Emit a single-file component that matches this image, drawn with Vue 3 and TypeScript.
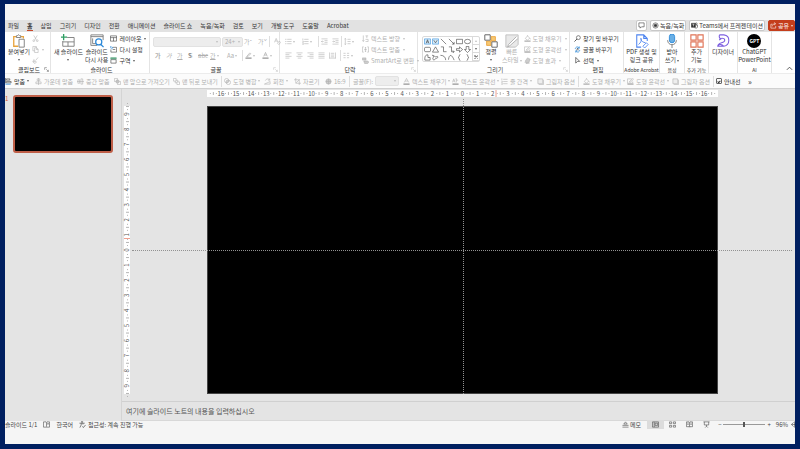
<script setup lang="ts">
import { ref } from 'vue'

interface Command {
  icon: string
  label: string
  menu?: boolean
  on?: boolean
  kind?: 'sep' | 'font' | 'check' | 'more'
}

const icons: Record<string, string> = {
  paste: '<path d="M5 3H2v11h5M10 3h3v2" stroke="#e8a33d" stroke-width="1.5"/><path d="M5 4V2h1l1-1h1l1 1h1v2z" stroke="#777"/><path d="M8 6h6v9H8z" fill="#fff" stroke="#777"/>',
  cut: '<path d="M4 1l6 10M12 1L6 11"/><circle cx="4" cy="13" r="2"/><circle cx="12" cy="13" r="2"/>',
  copy: '<path d="M6 11H2V1h8v3M6 4h5l3 3v8H6zM10 4v4h4"/>',
  brush: '<path d="M9 7l5-6M4 6l6 5-3 4-5-4zM2 11l6-1"/>',
  newSlide: '<path d="M7 4h8v10H2V8M2 9h13M8 9v5" stroke="#777"/><path d="M3 0v7M0 3.500h7" stroke="#2f9e63" stroke-width="1.500"/>',
  reuse: '<path d="M8 13H1V1h14v6M1 3h14M3 5v6h4" stroke="#777"/><circle cx="10" cy="9" r="3.500" fill="#fff" stroke="#2b88d8" stroke-width="1.400"/><path d="M12.500 12l3 3" stroke="#2b88d8" stroke-width="1.500"/>',
  layout: '<path d="M1 2h14v12H1zM1 6h14M8 6v8"/>',
  reset: '<path d="M6 3h9v11H2V8M6 8h6"/><path d="M1 5V1l6 3-5 3" stroke="#2b88d8"/>',
  section: '<path d="M2 6h12v8H2z"/><path d="M1 2h14M1 4h14" stroke="#399566" stroke-width="2"/>',
  pen: '<path d="M4 10l7-8 2 2-7 7H4z"/><path d="M1 14h14" stroke-width="3"/>',
  fontColor: '<path d="M4 10l4-9 4 9M6 7h4"/><path d="M1 14h14" stroke-width="3"/>',
  clear: '<path d="M1 10l4-9 4 9M3 7h4M8 12l4-5 3 3-4 5z"/>',
  bullets: '<path d="M1 3h2M1 8h2M1 13h2" stroke-width="2"/><path d="M5 3h10M5 8h10M5 13h10"/>',
  numbers: '<path d="M2 1v4M1 7h2v3H1M1 12h2v3H1M5 3h10M5 8h10M5 13h10"/>',
  outdent: '<path d="M1 2h14M8 6h7M8 10h7M1 14h14M6 8H1m2-2L1 8l2 2"/>',
  indent: '<path d="M1 2h14M8 6h7M8 10h7M1 14h14M1 8h5M4 6l2 2-2 2"/>',
  spacing: '<path d="M3 1v14M1 3l2-2 2 2M1 13l2 2 2-2M8 3h7M8 8h7M8 13h7"/>',
  left: '<path d="M1 2h14M1 6h9M1 10h14M1 14h9"/>',
  center: '<path d="M1 2h14M4 6h8M1 10h14M4 14h8"/>',
  right: '<path d="M1 2h14M6 6h9M1 10h14M6 14h9"/>',
  justify: '<path d="M1 2h14M1 6h14M1 10h14M1 14h14"/>',
  distribute: '<path d="M1 1v14M15 1v14M4 3h8M4 7h8M4 11h8M1 14h14"/>',
  columns: '<path d="M1 3h5M1 8h5M1 13h5M9 3h5M9 8h5M9 13h5"/>',
  textDir: '<path d="M3 1v13M1 12l2 3 2-3M8 2h6M11 2v5M8 10h6v5H8"/>',
  textAlign: '<path d="M4 2H1v12h3M12 2h3v12h-3M5 8h6M8 3v10M6 5l2-2 2 2M6 11l2 2 2-2"/>',
  smart: '<path d="M1 2h8v5H1zM4 9h9l3 3-3 3H6z" fill="#ccc"/>',
  arrange: '<path d="M1 1h6v6H1zM9 9h6v6H9z" fill="#fff" stroke="#777"/><path d="M8 3h5v5h-5v5H3V8h5z" fill="#f7c873" stroke="#e9a23b"/><path d="M1 1h6v6H1zM9 9h6v6H9z" fill="#fff" stroke="#777"/>',
  quick: '<path d="M1 1h14v11l-3 3H1z" fill="#e9e9e9" stroke="#bbb"/><path d="M15 5l-9 8-3 2 1-3 9-9" fill="#fff" stroke="#aaa"/>',
  fill: '<path d="M3 8l5-6 5 5-5 5zM8 2V0M13 7l2 3"/><path d="M1 14h14" stroke-width="3"/>',
  outline: '<path d="M11 2H1v10h12V8M5 9l8-8 2 2-8 7z"/><path d="M1 14h14" stroke-width="3"/>',
  effect: '<path d="M3 9l5-7 6 3-3 8-6 1z" fill="#ccc"/><path d="M1 11l4 4 8-1"/>',
  find: '<circle cx="10" cy="6" r="4.500"/><path d="M7 9l-6 6" stroke-width="1.800"/>',
  replaceFont: '<path d="M3 7c0-5 6-7 9-2M12 1v4H8M13 9c0 5-6 7-9 2M4 15v-4h4" stroke="#2b88d8" stroke-width="1.700"/><path d="M6 10l2-5 2 5"/>',
  select: '<path d="M4 1l9 9H8l-4 4z" stroke-width="1.500"/>',
  pdf: '<path d="M7 15H2V1h8l4 4v3M10 1v4h4" stroke="#4c83ef" stroke-width="1.200"/><path d="M4 12c3-2 4-6 3-7s-1 4 5 5M9 14l4-4 2 2-4 4z" stroke="#4c83ef"/>',
  mic: '<rect x="5" y="0" width="6" height="10" rx="3" fill="#69afe5" stroke="#2b88d8"/><path d="M3 7c0 7 10 7 10 0M8 12v4" stroke="#777"/>',
  addins: '<path d="M1 1h6v6H1zM9 1h6v6H9zM1 9h6v6H1zM9 9h6v6H9z" stroke="#e07356" stroke-width="1.300"/>',
  designer: '<path d="M4 1h5c8 1 7 12 0 13H2c0-5 8-3 8-7 0-3-6-3-6 0M4 1c-1 3 0 4 2 5M2 14c2-3 5-2 7 0" stroke="#7d5fe0" stroke-width="1.200"/>',
  comment: '<path d="M2 2h12v9H8l-3 3v-3H2z"/>',
  record: '<circle cx="8" cy="8" r="6"/><circle cx="8" cy="8" r="3" fill="#333"/>',
  teams: '<path d="M1 3h9v9H1z" fill="#333"/><path d="M3 5h5M5.500 5v5" stroke="#fff"/><circle cx="12" cy="4" r="2"/><path d="M11 7h4v5l-3 2-4-1"/>',
  share: '<path d="M6 5H2v9h11V9M5 10c0-4 3-6 7-6M9 1l4 3-4 3"/>',
  align: '<path d="M1 0v12M3 2h8v3H3zM3 8h11v3H3z"/><path d="M1 14h12" stroke="#2b88d8" stroke-width="2"/>',
  alignMid: '<path d="M8 0v16M5 2h6v4H5zM2 9h12v4H2z"/>',
  alignCenter: '<path d="M0 8h16M2 4h4v8H2zM9 2h4v12H9z"/>',
  front: '<path d="M1 1h7v7H1zM11 8h4v7H8v-4"/><path d="M5 5h6v6H5z" fill="#c4c4c4"/>',
  back: '<path d="M5 5h6v6H5z"/><path d="M1 1h6v6H1zM9 9h6v6H9z" fill="#fff"/>',
  merge: '<circle cx="6" cy="6" r="5"/><circle cx="10" cy="10" r="5"/><path d="M5 11l6-6M7 12l5-5M4 8l4-4"/>',
  rotate: '<path d="M1 14l13-6v6zM3 6c2-5 8-5 10-1M13 1v4H9"/>',
  crop: '<path d="M4 0v12h12M0 4h12v12M5 11l8-8"/>',
  ratio: '<circle cx="8" cy="8" r="6" fill="#ccc"/><path d="M2 8h12M8 2v12"/>',
  textFill: '<path d="M3 10l5-9 5 9M5 7h6"/><path d="M1 14h14" stroke="#999" stroke-width="3"/>',
  textLine: '<path d="M1 10l3-8 3 8M2 7h4M10 1v9M10 5h4M8 2h2"/><path d="M1 14h14" stroke="#999" stroke-width="3"/>',
  shadow: '<path d="M2 2h11v11H2z" fill="#eee"/><path d="M4 15h11V4"/>',
  book: '<path d="M1 2h6l1 1 1-1h6v12H1zM8 3v10M10 5l3 3M13 5l-3 3"/>',
  access: '<circle cx="7" cy="2" r="1.500"/><path d="M1 5h12M5 5v4l-3 6M9 5v3M8 12l2 3 5-6" stroke-width="1.500"/>',
  notes: '<path d="M1 14h14M1 10h14M4 7l4-5 4 5z"/>',
  normal: '<path d="M1 2h14v12H1zM5 2v12M7 5h6v5H7z"/>',
  sorter: '<path d="M1 2h5v4H1zM10 2h5v4h-5zM1 10h5v4H1zM10 10h5v4h-5z"/>',
  reading: '<path d="M1 2h6l1 1 1-1h6v11H9l-1 1-1-1H1zM8 3v11M3 5h3M3 8h3M10 5h3M10 8h3"/>',
  show: '<path d="M1 2h14M3 2v7h10V2M8 9v3M5 15l3-3 3 3"/>',
  fit: '<path d="M6 3L1 8l5 5M1 8h14M8 1v14"/>',
  launcher: '<path d="M2 9V2h7M7 7l7 7M14 9v5H9"/>',
  up: '<path d="M2 11l6-6 6 6" stroke-width="1.800"/>',
}

const shapes: string[] = [
  '<path d="M1 2h14v12H1z" fill="#d4ebfb" stroke="#2b88d8"/><path d="M5 12l3-8 3 8M6 9h4"/>',
  '<path d="M1 2h14v12H1z" fill="#d4ebfb" stroke="#2b88d8"/><path d="M4 5l4 6 4-6"/>',
  '<path d="M2 2l12 12"/>',
  '<path d="M2 2l12 12M14 9v5H9"/>',
  '<path d="M1 3h14v10H1z"/>',
  '<ellipse cx="8" cy="8" rx="7" ry="5"/>',
  '<rect x="1" y="3" width="14" height="10" rx="3"/>',
  '<path d="M8 2l7 12H1z"/>',
  '<path d="M2 2h6v11h7"/>',
  '<path d="M2 2h6v11h6M11 10l3 3-3 3"/>',
  '<path d="M1 6h7V2l7 6-7 6v-4H1z"/>',
  '<path d="M5 1h6v7h4l-7 7-7-7h4z"/>',
  '<path d="M9 2c-5-1-8 4-7 12h12V8H9z"/>',
  '<path d="M1 3c5 0 5 5 9 3s5 3 0 4-3 5-7 3 4-7-2-10z"/>',
  '<path d="M1 3c7 0 12 4 12 11"/>',
  '<path d="M1 13C3-1 9 1 14 14"/>',
  '<path d="M10 1C6 1 9 7 5 8c4 1 1 7 5 7"/>',
  '<path d="M6 1c4 0 1 6 5 7-4 1-1 7-5 7"/>',
]

const tabs = ['파일', '홈', '삽입', '그리기', '디자인', '전환', '애니메이션', '슬라이드 쇼', '녹음/녹화', '검토', '보기', '개발 도구', '도움말', 'Acrobat']

const quickBar: Command[] = [
  { icon: 'align', label: '맞춤', menu: true, on: true },
  { icon: 'alignMid', label: '가운데 맞춤' },
  { icon: 'alignCenter', label: '중간 맞춤' },
  { icon: 'front', label: '맨 앞으로 가져오기' },
  { icon: 'back', label: '맨 뒤로 보내기' },
  { icon: '', label: '', kind: 'sep' },
  { icon: 'merge', label: '도형 병합', menu: true },
  { icon: 'rotate', label: '회전', menu: true },
  { icon: 'crop', label: '자르기' },
  { icon: 'ratio', label: '16:9' },
  { icon: '', label: '', kind: 'sep' },
  { icon: '', label: '글꼴(F):', kind: 'font' },
  { icon: 'textFill', label: '텍스트 채우기', menu: true },
  { icon: 'textLine', label: '텍스트 윤곽선', menu: true },
  { icon: 'numbers', label: '줄 간격', menu: true },
  { icon: 'shadow', label: '그림자 옵션' },
  { icon: '', label: '', kind: 'sep' },
  { icon: 'fill', label: '도형 채우기', menu: true },
  { icon: 'outline', label: '도형 윤곽선', menu: true },
  { icon: 'shadow', label: '그림자 옵션' },
  { icon: '', label: '', kind: 'sep' },
  { icon: '', label: '안내선', kind: 'check', on: true },
  { icon: '', label: '»', kind: 'more', on: true },
]

const slideTools: Command[] = [
  { icon: 'layout', label: '레이아웃', menu: true, on: true },
  { icon: 'reset', label: '다시 설정', on: true },
  { icon: 'section', label: '구역', menu: true, on: true },
]
const textTools: Command[] = [
  { icon: 'textDir', label: '텍스트 방향', menu: true },
  { icon: 'textAlign', label: '텍스트 맞춤', menu: true },
  { icon: 'smart', label: 'SmartArt로 변환', menu: true },
]
const shapeTools: Command[] = [
  { icon: 'fill', label: '도형 채우기', menu: true },
  { icon: 'outline', label: '도형 윤곽선', menu: true },
  { icon: 'effect', label: '도형 효과', menu: true },
]
const editTools: Command[] = [
  { icon: 'find', label: '찾기 및 바꾸기', on: true },
  { icon: 'replaceFont', label: '글꼴 바꾸기', on: true },
  { icon: 'select', label: '선택', menu: true, on: true },
]

const unit = 15.1
const marks = (n: number) => Array.from({ length: n * 2 + 1 }, (_, i) => i - n)
const gaps = (n: number) => Array.from({ length: n * 2 + 2 }, (_, i) => i - n - 1)
const hMarks = marks(16)
const vMarks = marks(9)

const guides = ref(true)
const zoom = ref(96)
</script>

<template>
  <div class="desktop">
    <main class="window">
      <header class="title"></header>

      <nav class="tabs">
        <a v-for="t in tabs" :key="t" href="#" :class="{ active: t === '홈' }">{{ t }}</a>
        <div class="tab-actions">
          <button class="box" aria-label="comment"><svg class="icon" viewBox="0 0 16 16" v-html="icons.comment" /></button>
          <button class="box"><svg class="icon" viewBox="0 0 16 16" v-html="icons.record" />녹음/녹화</button>
          <button class="box"><svg class="icon" viewBox="0 0 16 16" v-html="icons.teams" />Teams에서 프레젠테이션</button>
          <button class="box share"><svg class="icon" viewBox="0 0 16 16" v-html="icons.share" />공유<i class="caret" /></button>
        </div>
      </nav>

      <section class="ribbon">
        <div class="group">
          <div class="body">
            <button class="big"><svg class="pic" viewBox="0 0 16 16" v-html="icons.paste" />붙여넣기<i class="caret" /></button>
            <div class="stack off">
              <button class="row" aria-label="cut"><svg class="icon" viewBox="0 0 16 16" v-html="icons.cut" /></button>
              <button class="row" aria-label="copy"><svg class="icon" viewBox="0 0 16 16" v-html="icons.copy" /><i class="caret" /></button>
              <button class="row" aria-label="format painter"><svg class="icon" viewBox="0 0 16 16" v-html="icons.brush" /></button>
            </div>
          </div>
          <h2>클립보드</h2>
          <svg class="launch" viewBox="0 0 16 16" v-html="icons.launcher" />
        </div>

        <div class="group">
          <div class="body">
            <button class="big"><svg class="pic" viewBox="0 0 16 16" v-html="icons.newSlide" />새 슬라이드<i class="caret" /></button>
            <button class="big"><svg class="pic" viewBox="0 0 16 16" v-html="icons.reuse" /><span>슬라이드<br>다시 사용</span></button>
            <div class="stack">
              <button v-for="c in slideTools" :key="c.label" class="row">
                <svg class="icon" viewBox="0 0 16 16" v-html="icons[c.icon]" />{{ c.label }}<i v-if="c.menu" class="caret" />
              </button>
            </div>
          </div>
          <h2>슬라이드</h2>
        </div>

        <div class="group">
          <div class="body lines off">
            <div class="line font-top">
              <span class="pick"><select aria-label="font"><option></option></select><i class="caret" /></span>
              <span class="pick"><select aria-label="size"><option>24+</option></select><i class="caret" /></span>
              <button>가ˆ</button>
              <button>가ˇ</button>
              <i class="bar" />
              <button aria-label="clear"><svg class="icon" viewBox="0 0 16 16" v-html="icons.clear" /></button>
            </div>
            <div class="line font-low">
              <button><b>가</b></button>
              <button><em>가</em></button>
              <button><u>가</u></button>
              <button><b class="shade">S</b></button>
              <button><s>abc</s></button>
              <button><u>간</u><i class="caret" /></button>
              <button>Aa<i class="caret" /></button>
              <i class="bar" />
              <button aria-label="highlight"><svg class="icon dim" viewBox="0 0 16 16" v-html="icons.pen" /><i class="caret" /></button>
              <button aria-label="font color"><svg class="icon dim" viewBox="0 0 16 16" v-html="icons.fontColor" /><i class="caret" /></button>
            </div>
          </div>
          <h2>글꼴</h2>
          <svg class="launch off" viewBox="0 0 16 16" v-html="icons.launcher" />
        </div>

        <div class="group">
          <div class="body para off">
            <div class="lines">
              <div class="line para-top">
                <button aria-label="bullets"><svg class="icon" viewBox="0 0 16 16" v-html="icons.bullets" /><i class="caret" /></button>
                <button aria-label="numbering"><svg class="icon" viewBox="0 0 16 16" v-html="icons.numbers" /><i class="caret" /></button>
                <i class="bar" />
                <button aria-label="outdent"><svg class="icon" viewBox="0 0 16 16" v-html="icons.outdent" /></button>
                <button aria-label="indent"><svg class="icon" viewBox="0 0 16 16" v-html="icons.indent" /></button>
                <i class="bar" />
                <button aria-label="line spacing"><svg class="icon" viewBox="0 0 16 16" v-html="icons.spacing" /><i class="caret" /></button>
              </div>
              <div class="line para-low">
                <button v-for="a in ['left', 'center', 'right', 'justify', 'distribute']" :key="a" :aria-label="a">
                  <svg class="icon" viewBox="0 0 16 16" v-html="icons[a]" />
                </button>
                <i class="bar" />
                <button aria-label="columns"><svg class="icon" viewBox="0 0 16 16" v-html="icons.columns" /><i class="caret" /></button>
              </div>
            </div>
            <div class="stack">
              <button v-for="c in textTools" :key="c.label" class="row">
                <svg class="icon" viewBox="0 0 16 16" v-html="icons[c.icon]" />{{ c.label }}<i v-if="c.menu" class="caret" />
              </button>
            </div>
          </div>
          <h2>단락</h2>
          <svg class="launch off" viewBox="0 0 16 16" v-html="icons.launcher" />
        </div>

        <div class="group">
          <div class="body draw">
            <div class="gallery">
              <div class="shapes">
                <svg v-for="(s, i) in shapes" :key="i" class="icon" viewBox="0 0 16 16" v-html="s" />
              </div>
              <div class="scroll">
                <button class="off" aria-label="up"><i class="caret flip" /></button>
                <button aria-label="down"><i class="caret" /></button>
                <button aria-label="more"><i class="caret line-over" /></button>
              </div>
            </div>
            <button class="big"><svg class="pic" viewBox="0 0 16 16" v-html="icons.arrange" />정렬<i class="caret" /></button>
            <button class="big off"><svg class="pic" viewBox="0 0 16 16" v-html="icons.quick" /><span>빠른<br>스타일<i class="caret" /></span></button>
            <div class="stack off">
              <button v-for="c in shapeTools" :key="c.label" class="row">
                <svg class="icon" viewBox="0 0 16 16" v-html="icons[c.icon]" />{{ c.label }}<i v-if="c.menu" class="caret" />
              </button>
            </div>
          </div>
          <h2>그리기</h2>
          <svg class="launch off" viewBox="0 0 16 16" v-html="icons.launcher" />
        </div>

        <div class="group">
          <div class="body edit">
            <div class="stack">
              <button v-for="c in editTools" :key="c.label" class="row">
                <svg class="icon" viewBox="0 0 16 16" v-html="icons[c.icon]" />{{ c.label }}<i v-if="c.menu" class="caret" />
              </button>
            </div>
          </div>
          <h2>편집</h2>
        </div>

        <div class="group solo">
          <button class="big"><svg class="pic" viewBox="0 0 16 16" v-html="icons.pdf" /><span>PDF 생성 및<br>링크 공유</span></button>
          <h2>Adobe Acrobat</h2>
        </div>
        <div class="group solo">
          <button class="big"><svg class="pic" viewBox="0 0 16 16" v-html="icons.mic" /><span>받아<br>쓰기<i class="caret" /></span></button>
          <h2>음성</h2>
        </div>
        <div class="group solo">
          <button class="big"><svg class="pic" viewBox="0 0 16 16" v-html="icons.addins" /><span>추가<br>기능</span></button>
          <h2>추가 기능</h2>
        </div>
        <div class="group solo">
          <button class="big"><svg class="pic" viewBox="0 0 16 16" v-html="icons.designer" />디자이너</button>
        </div>
        <div class="group solo">
          <button class="big"><span class="gpt">GPT</span><span>ChatGPT<br>PowerPoint</span></button>
          <h2>AI</h2>
        </div>
        <div class="collapse">
          <button aria-label="collapse"><svg class="icon" viewBox="0 0 16 16" v-html="icons.up" /></button>
        </div>
      </section>

      <section class="quick">
        <template v-for="(c, i) in quickBar" :key="i">
          <i v-if="c.kind === 'sep'" class="bar" />
          <label v-else-if="c.kind === 'font'" class="cmd off">{{ c.label }}<span class="pick"><select><option></option></select><i class="caret" /></span></label>
          <label v-else-if="c.kind === 'check'" class="cmd"><input v-model="guides" type="checkbox">{{ c.label }}</label>
          <button v-else-if="c.kind === 'more'" class="cmd more">{{ c.label }}</button>
          <button v-else class="cmd" :class="{ off: !c.on }">
            <svg class="icon" viewBox="0 0 16 16" v-html="icons[c.icon]" />{{ c.label }}<i v-if="c.menu" class="caret" />
          </button>
        </template>
      </section>

      <section class="work">
        <aside class="thumbs">
          <span class="num">1</span>
          <button class="thumb" aria-label="1"></button>
        </aside>
        <div class="editor">
          <div class="canvas">
            <svg class="ruler-h" viewBox="-255 0 510 7">
              <path v-for="n in gaps(16)" :key="n" :d="`M${(n + 0.5) * unit} 2v3M${(n + 0.3) * unit} 3v1M${(n + 0.7) * unit} 3v1`" />
              <text v-for="n in hMarks" :key="n" :x="n * unit" y="6">{{ Math.abs(n) }}</text>
              <path class="pos" d="M33.500 0v7" />
            </svg>
            <svg class="ruler-v" viewBox="0 -144 6 288">
              <path v-for="n in gaps(9)" :key="n" :d="`M2 ${(n + 0.5) * unit}h3M3 ${(n + 0.3) * unit}h1M3 ${(n + 0.7) * unit}h1`" />
              <text v-for="n in vMarks" :key="n" :x="-n * unit" y="5" transform="rotate(-90)">{{ Math.abs(n) }}</text>
              <path class="pos" d="M0 -11.500h6" />
            </svg>
            <div class="slide"></div>
            <template v-if="guides">
              <i class="guide-h" />
              <i class="guide-v" />
            </template>
          </div>
          <p class="notes">여기에 슬라이드 노트의 내용을 입력하십시오</p>
        </div>
      </section>

      <footer class="status">
        <span class="count">슬라이드 1/1</span>
        <svg class="icon" viewBox="0 0 16 16" v-html="icons.book" />
        <span>한국어</span>
        <button class="row"><svg class="icon" viewBox="0 0 16 16" v-html="icons.access" />접근성: 계속 진행 가능</button>
        <div class="views">
          <button class="row"><svg class="icon" viewBox="0 0 16 16" v-html="icons.notes" />메모</button>
          <button v-for="v in ['normal', 'sorter', 'reading', 'show']" :key="v" class="view" :class="{ current: v === 'normal' }" :aria-label="v">
            <svg class="icon" viewBox="0 0 16 16" v-html="icons[v]" />
          </button>
          <div class="zoom">
            <button>−</button>
            <input v-model="zoom" type="range" min="10" max="190" aria-label="zoom">
            <button>+</button>
          </div>
          <span class="percent">{{ zoom }}%</span>
          <svg class="icon" viewBox="0 0 16 16" v-html="icons.fit" />
        </div>
      </footer>
    </main>
  </div>
</template>

<style>
body {
  margin: 0;
  background: #001f60;
}
</style>

<style scoped>
.desktop {
  box-sizing: border-box;
  height: 100vh;
  padding: 4px 5px 5px;
  background: #001f60;
  color: #333;
  font: 400 6px/7px "Noto Sans CJK KR", "Noto Sans", sans-serif;
  white-space: nowrap;
}
.window {
  display: flex;
  flex-direction: column;
  height: 100%;
  overflow: hidden;
  background: #f5f5f5;
}
button, select, input {
  font: inherit;
  color: inherit;
  margin: 0;
  padding: 0;
  border: 0;
  background: none;
  white-space: nowrap;
}
a { color: inherit; text-decoration: none; }
.off { color: #b0b0b0; }
.dim { color: #999; }
.icon, .pic, .launch {
  flex: none;
  width: 7px;
  height: 7px;
  fill: none;
  stroke: currentColor;
  stroke-width: 1.3;
}
.caret {
  display: inline-block;
  flex: none;
  border: 1px solid transparent;
  border-top: 2px solid currentColor;
  border-bottom: 0;
  margin-left: 1px;
  opacity: 0.8;
}
.bar {
  width: 1px;
  height: 11px;
  background: #dedede;
}

.title { flex: none; height: 16px; background: #f5f5f5; }

.tabs {
  display: flex;
  flex: none;
  gap: 8px;
  height: 12px;
  padding-left: 3px;
  line-height: 12px;
  background: #e2e2e2;
}
.tabs .active { border-bottom: 1px solid #c8482a; box-sizing: border-box; height: 11px; font-weight: 700; }
.tab-actions {
  display: flex;
  gap: 3px;
  height: 11px;
  margin-left: auto;
}
.box {
  display: flex;
  align-items: center;
  gap: 1px;
  padding: 0 1px;
  border: 1px solid #c8c8c8;
  border-radius: 2px;
  background: #fff;
  line-height: 9px;
}
.share { background: #c43e1c; border-color: #c43e1c; color: #fff; }

.ribbon {
  display: grid;
  grid-template-columns: 46px 99px 130px 138px 152px 54px 36px 25px 24px 29px 34px 1fr;
  flex: none;
  height: 41px;
  background: #fff;
}
.group {
  position: relative;
  display: flex;
  flex-direction: column;
  justify-content: space-between;
  box-sizing: border-box;
  min-width: 0;
  border-right: 1px solid #e4e4e4;
  padding: 2px 0 0 3px;
}
h2 {
  display: flex;
  justify-content: center;
  margin: 0;
  font: inherit;
}
.launch { position: absolute; right: 1px; bottom: 1px; width: 5px; height: 5px; }
.body { display: flex; gap: 2px; }
.big {
  display: flex;
  flex-direction: column;
  align-items: center;
  flex: none;
  height: 31px;
  line-height: 8px;
}
.big .pic { width: 14px; height: 14px; stroke-width: 1; }
.big > .caret { margin: 3px 0 0; }
.stack { display: flex; flex-direction: column; gap: 4px; padding-top: 1px; }
.row { display: flex; align-items: center; gap: 2px; }

.lines { display: flex; flex-direction: column; gap: 3px; padding-top: 2px; }
.line { display: grid; align-items: center; height: 11px; }
.line button { display: flex; align-items: center; }
.pick {
  display: flex;
  align-items: center;
  box-sizing: border-box;
  height: 10px;
  padding: 0 2px;
  border: 1px solid #e2e2e2;
  border-radius: 2px;
  background: #ededed;
}
.pick select { flex: 1; min-width: 0; appearance: none; }
.font-top { grid-template-columns: 68px 21px 13px 10px 4px 8px; column-gap: 1px; }
.font-low { grid-template-columns: 11px 11px 11px 10px 12px 17px 15px 3px 17px 10px; padding-left: 2px; }
.shade { text-shadow: 1px 0 #ddd; color: #888; }
.para { gap: 6px; padding-left: 2px; }
.para-top { grid-template-columns: 17px 16px 3px 11px 9px 3px 12px; }
.para-low { grid-template-columns: repeat(5, 11px) 3px 13px; }

.draw { padding-left: 1px; gap: 4px; }
.gallery {
  display: flex;
  box-sizing: border-box;
  width: 58px;
  height: 26px;
  margin-top: 2px;
  border: 1px solid #dadada;
  border-radius: 2px;
}
.shapes {
  display: grid;
  grid-template-columns: repeat(6, 1fr);
  flex: 1;
  place-items: center;
}
.scroll { display: grid; width: 6px; border-left: 1px solid #dadada; }
.scroll button { display: grid; place-items: center; border-bottom: 1px solid #dadada; }
.scroll .caret { margin: 0; }
.flip { rotate: 180deg; }
.line-over { outline: 1px dotted #999; }
.draw .stack { margin-left: -2px; }
.edit { padding-left: 1px; }

.solo { padding-left: 0; align-items: center; }
.solo h2 { font-size: 5px; }
.gpt {
  width: 14px;
  height: 14px;
  border-radius: 50%;
  background: #000;
  color: #fff;
  font-size: 5px;
  font-weight: 700;
  line-height: 14px;
}
.collapse { display: flex; justify-content: flex-end; align-items: flex-end; padding: 0 2px 0 0; }

.quick {
  display: grid;
  grid-template-columns: 30px 42px 37px 59px 48px 3px 40px 30px 31px 24px 4px 50px 49px 49px 36px 41px 5px 44px 45px 41px 3px 32px 1fr;
  align-items: center;
  flex: none;
  box-sizing: border-box;
  height: 16px;
  background: #fbfbfb;
  border-top: 1px solid #ececec;
  border-bottom: 1px solid #d0d0d0;
}
.cmd { display: flex; align-items: center; gap: 2px; }
.cmd .caret { margin-left: 0; }
.cmd .pick { flex: 1; margin-right: 4px; }
.more { font-size: 8px; }
.cmd input {
  appearance: none;
  display: grid;
  place-items: center;
  box-sizing: border-box;
  width: 6px;
  height: 6px;
  border: 1px solid #666;
  border-radius: 1px;
}
.cmd input:checked::before {
  content: "";
  width: 1px;
  height: 2px;
  border: solid #333;
  border-width: 0 1px 1px 0;
  rotate: 45deg;
}

.work {
  display: grid;
  grid-template-columns: 117px 1fr;
  flex: 1;
  min-height: 0;
  background: #e4e4e4;
}
.thumbs {
  display: flex;
  align-items: flex-start;
  gap: 5px;
  padding-top: 6px;
  border-right: 1px solid #d4d4d4;
}
.num { color: #d8583c; }
.thumb {
  width: 100px;
  height: 58px;
  border: 2px solid #bf5f48;
  border-radius: 3px;
  background: #000;
}
.editor { display: flex; flex-direction: column; min-width: 0; }
.canvas {
  position: relative;
  display: grid;
  grid-template-columns: 2px 6px 77px 1fr 77px;
  grid-template-rows: 1px 7px 9px 1fr 7px;
  flex: 1;
  min-height: 0;
}
.ruler-h, .ruler-v { overflow: visible; background: #fff; stroke: #b4b4b4; fill: none; stroke-width: 1; }
.ruler-h { grid-area: 2 / 4; width: 100%; height: 7px; }
.ruler-v { grid-area: 4 / 2; width: 6px; height: 100%; }
.ruler-h text, .ruler-v text { fill: #555; stroke: none; font-size: 6px; text-anchor: middle; }
.ruler-h .pos, .ruler-v .pos { stroke: #f0a090; }
.slide { grid-area: 4 / 4; background: #000; border: 1px solid #444; }
.guide-h, .guide-v { position: absolute; border: 0 dotted #929292; }
.guide-h { left: 10px; right: 3px; top: 161px; border-top-width: 1px; }
.guide-v { grid-area: 3 / 4 / 5 / 5; top: 2px; bottom: 0; left: 50%; border-left-width: 1px; }
.notes {
  flex: none;
  margin: 0;
  padding: 3px 4px;
  border-top: 1px solid #d0d0d0;
  border-bottom: 1px solid #d8d8d8;
  color: #555;
  font-size: 7px;
  line-height: 12px;
}

.status {
  display: flex;
  gap: 6px;
  align-items: center;
  flex: none;
  height: 7px;
  padding-bottom: 16px;
  color: #444;
}
.views { display: flex; align-items: center; margin: 0 -3px 0 auto; }
.view { display: grid; place-items: center; width: 17px; height: 9px; }
.views .row { margin-right: 6px; gap: 1px; }
.current { background: #dcdcdc; }
.zoom { display: flex; align-items: center; gap: 2px; margin: 0 5px 0 3px; }
.zoom input {
  appearance: none;
  width: 42px;
  height: 1px;
  background: #999;
}
.zoom input::-webkit-slider-thumb {
  appearance: none;
  width: 2px;
  height: 5px;
  background: #555;
}
.percent { margin-right: 3px; }
</style>
